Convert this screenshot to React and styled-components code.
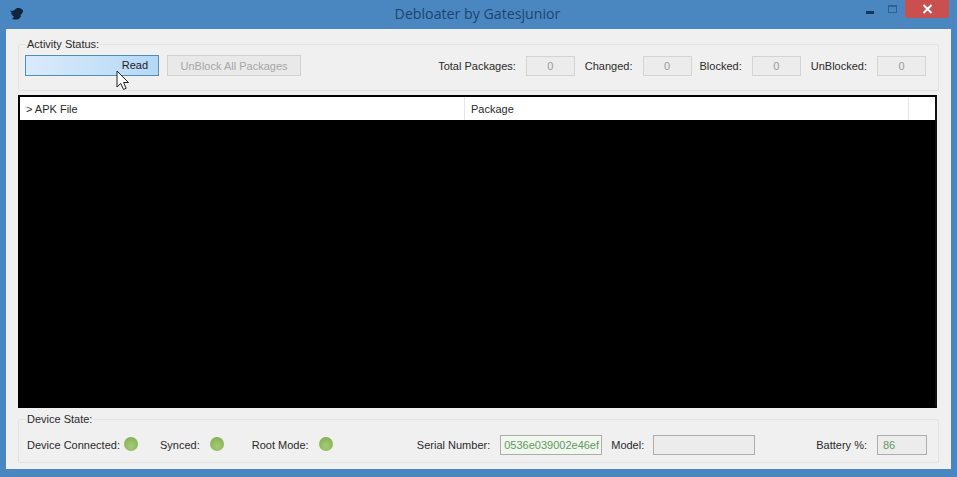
import { createGlobalStyle } from "styled-components";
import styled from "styled-components";

const GlobalStyle = createGlobalStyle`
  html, body {
    margin: 0;
    padding: 0;
    background: #4a86c0;
  }
`;

const Frame = styled.div`
  width: 957px;
  height: 477px;
  overflow: hidden;
  display: flex;
  flex-direction: column;
  box-sizing: border-box;
  padding: 0 6px 8px;
  background: #4a86c0;
  font-family: "Liberation Sans", Arial, sans-serif;
  font-size: 11px;
  color: #2a2a2a;
`;

const TitleBar = styled.div`
  height: 29px;
  flex: none;
  display: flex;
  align-items: flex-start;
  position: relative;
`;

const AppIcon = styled.svg`
  width: 15px;
  height: 13px;
  margin: 7px 0 0 3px;
`;

const Title = styled.div`
  position: absolute;
  left: 0;
  right: 2px;
  top: 5px;
  text-align: center;
  font-family: "Open Sans", sans-serif;
  font-size: 14.2px;
  line-height: 18px;
  color: #1d4470;
`;

const WindowControls = styled.div`
  margin-left: auto;
  display: flex;
  align-items: flex-start;
  margin-right: 2px;
`;

const MinButton = styled.div`
  width: 8px;
  height: 3px;
  margin: 11px 14px 0 0;
  background: #17365c;
`;

const MaxButton = styled.div`
  width: 9px;
  height: 8px;
  box-sizing: border-box;
  margin: 5px 8px 0 0;
  border: 1px solid #2f5f93;
  border-top-width: 2px;
`;

const CloseButton = styled.div`
  width: 44px;
  height: 18px;
  display: flex;
  align-items: center;
  justify-content: center;
  background: #c9504f;
  border-radius: 0 0 2px 2px;
`;

const Body = styled.div`
  flex: 1;
  min-height: 0;
  display: flex;
  flex-direction: column;
  box-sizing: border-box;
  padding: 8px 12px 6px;
  background: #f0f0f0;
`;

const Group = styled.fieldset`
  margin: 0;
  min-width: 0;
  flex: none;
  border: 1px solid #e2e2e2;
  border-radius: 2px;
  padding: ${(p) => p.$padding};
`;

const Legend = styled.legend`
  margin-left: ${(p) => p.$left};
  padding: 0 1px;
  font-size: 11px;
  line-height: 14px;
`;

const Row = styled.div`
  display: flex;
  align-items: center;
`;

const PushRight = styled.div`
  margin-left: auto;
  display: flex;
  align-items: center;
`;

const ReadButton = styled.div`
  position: relative;
  box-sizing: border-box;
  width: 134px;
  height: 21px;
  padding: 0 10px 2px 0;
  display: flex;
  align-items: center;
  justify-content: flex-end;
  border: 1px solid #4f8fbf;
  background: linear-gradient(90deg, #d9ebfb 0%, #c4e0f8 60%, #b6d8f5 100%);
  color: #1c1c1c;
`;

const Cursor = styled.svg`
  position: absolute;
  left: 90px;
  top: 14px;
  width: 14px;
  height: 21px;
`;

const GhostButton = styled.div`
  box-sizing: border-box;
  width: 134px;
  height: 21px;
  margin-left: 8px;
  display: flex;
  align-items: center;
  justify-content: center;
  border: 1px solid #d2d2d2;
  background: #e9e9e9;
  color: #a6a6a6;
`;

const Stat = styled.div`
  display: flex;
  align-items: center;
  gap: 10px;
  margin-right: ${(p) => p.$after};
`;

const Label = styled.span`
  white-space: nowrap;
`;

const CountBox = styled.div`
  box-sizing: border-box;
  width: 49px;
  height: 20px;
  display: flex;
  align-items: center;
  justify-content: center;
  border: 1px solid #d4d4d4;
  background: #ececec;
  color: #9a9a9a;
`;

const Table = styled.div`
  flex: 1;
  min-height: 0;
  margin: 4px 2px 4px 0;
  display: flex;
  flex-direction: column;
  border: 2px solid #000;
  border-right-color: #111;
  background: #000;
`;

const HeaderRow = styled.div`
  height: 23px;
  flex: none;
  display: grid;
  grid-template-columns: 445px 444px 1fr;
  background: #fff;
`;

const HeaderCell = styled.div`
  display: flex;
  align-items: center;
  padding-left: 6px;
  border-right: 1px solid #e6e6e6;
  &:last-child {
    border-right: 0;
  }
`;

const DeviceItem = styled.div`
  display: flex;
  align-items: center;
  margin-right: ${(p) => p.$after};
  gap: ${(p) => p.$gap};
`;

const Led = styled.div`
  width: 14px;
  height: 14px;
  margin-top: -3px;
  border-radius: 50%;
  background: radial-gradient(circle at 50% 65%, #a4cc72 0%, #8db85f 60%, #789f52 100%);
`;

const InfoBox = styled.div`
  box-sizing: border-box;
  width: ${(p) => p.$width};
  height: 20px;
  display: flex;
  align-items: center;
  padding-left: 3px;
  border: 1px solid #adadad;
  background: ${(p) => p.$bg || "#ececec"};
  color: #5f9a62;
  overflow: hidden;
  white-space: nowrap;
`;

const BatteryBox = styled(InfoBox)`
  padding-left: 5px;
`;

export default function App() {
  const stats = [
    ["Total Packages:", 0, "10px"],
    ["Changed:", 0, "8px"],
    ["Blocked:", 0, "10px"],
    ["UnBlocked:", 0, "0"],
  ];

  return (
    <>
      <GlobalStyle />
      <Frame>
        <TitleBar>
          <AppIcon viewBox="0 0 15 13">
            <path
              d="M1 3.500C3 4.500 5 3.800 6 2.500C7 1 9 .5 11 1.200C12.500 1.700 13.500 2.500 14 3.500C14 5.500 13 7 11.500 7.800C12.500 9.500 11 12 8 12.500C6 12.800 4 12.300 3 11.500C4.500 10.800 5 10 4.500 9C3 8.500 2 7 2.500 5.500C1.800 5 1.200 4.300 1 3.500Z"
              fill="#10233f"
            />
          </AppIcon>
          <Title>Debloater by Gatesjunior</Title>
          <WindowControls>
            <MinButton />
            <MaxButton />
            <CloseButton>
              <svg width="11" height="10" viewBox="0 0 11 10">
                <path d="M1.500 1L9.500 9M9.500 1L1.500 9" stroke="#fff" strokeWidth="2" />
              </svg>
            </CloseButton>
          </WindowControls>
        </TitleBar>
        <Body>
          <Group $padding="4px 12px 14px 6px">
            <Legend $left="1px">Activity Status:</Legend>
            <Row>
              <ReadButton>
                Read
                <Cursor viewBox="0 0 14 21">
                  <path
                    d="M1 1V17L4.800 13.400L7.500 19.500L10.200 18.300L7.600 12.500H12.500Z"
                    fill="#fff"
                    stroke="#222"
                    strokeWidth="1"
                    strokeLinejoin="round"
                  />
                </Cursor>
              </ReadButton>
              <GhostButton>UnBlock All Packages</GhostButton>
              <PushRight>
                {stats.map(([label, value, after]) => (
                  <Stat key={label} $after={after}>
                    <Label>{label}</Label>
                    <CountBox>{value}</CountBox>
                  </Stat>
                ))}
              </PushRight>
            </Row>
          </Group>
          <Table>
            <HeaderRow>
              <HeaderCell>&gt; APK File</HeaderCell>
              <HeaderCell>Package</HeaderCell>
              <HeaderCell />
            </HeaderRow>
          </Table>
          <Group $padding="9px 11px 7px 8px">
            <Legend $left="-1px">Device State:</Legend>
            <Row>
              <DeviceItem $gap="4px" $after="22px">
                <Label>Device Connected:</Label>
                <Led />
              </DeviceItem>
              <DeviceItem $gap="10px" $after="28px">
                <Label>Synced:</Label>
                <Led />
              </DeviceItem>
              <DeviceItem $gap="10px" $after="0">
                <Label>Root Mode:</Label>
                <Led />
              </DeviceItem>
              <PushRight>
                <DeviceItem $gap="10px" $after="9px">
                  <Label>Serial Number:</Label>
                  <InfoBox $width="102px" $bg="#f1f6ef">
                    0536e039002e46ef
                  </InfoBox>
                </DeviceItem>
                <DeviceItem $gap="9px" $after="61px">
                  <Label>Model:</Label>
                  <InfoBox $width="102px" />
                </DeviceItem>
                <DeviceItem $gap="10px" $after="0">
                  <Label>Battery %:</Label>
                  <BatteryBox $width="50px">86</BatteryBox>
                </DeviceItem>
              </PushRight>
            </Row>
          </Group>
        </Body>
      </Frame>
    </>
  );
}
